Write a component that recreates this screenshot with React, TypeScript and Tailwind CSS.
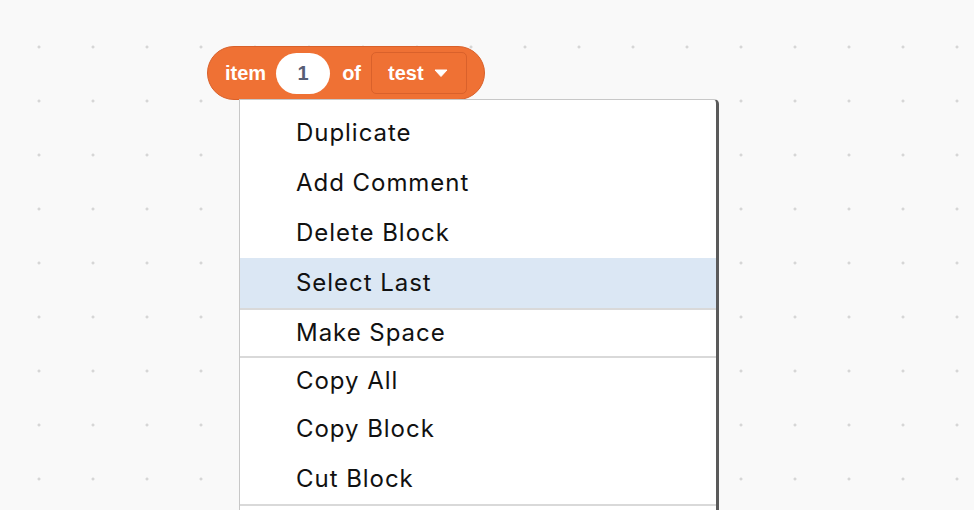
import React from 'react';

const menuFont = { fontFamily: 'Inter, "Open Sans", sans-serif' };

interface MenuItem {
  label: string;
  highlighted?: boolean;
  divider?: boolean;
  height: string;
}

const items: MenuItem[] = [
  { label: 'Duplicate', height: 'h-[50px]' },
  { label: 'Add Comment', height: 'h-[50px]' },
  { label: 'Delete Block', height: 'h-[50px]' },
  { label: 'Select Last', highlighted: true, height: 'h-[50px]' },
  { label: 'Make Space', divider: true, height: 'h-[48px]' },
  { label: 'Copy All', divider: true, height: 'h-[48px]' },
  { label: 'Copy Block', height: 'h-[50px]' },
  { label: 'Cut Block', height: 'h-[50px]' },
  { label: '', divider: true, height: 'h-[50px]' },
];

function Block() {
  return (
    <div
      className="flex items-center h-[54px] w-[278px] pl-[17px] pr-[15px] rounded-full bg-[#ef7134] border border-[#d9612b] text-white font-bold text-[20px]"
      style={{ fontFamily: '"Liberation Sans", Arial, sans-serif' }}
    >
      <span>item</span>
      <div className="ml-[10px] flex items-center justify-center w-[54px] h-[41px] rounded-full bg-white text-[#575e75] font-bold">
        1
      </div>
      <span className="ml-[12px]">of</span>
      <div className="ml-[10px] flex items-center h-[42px] w-[96px] pl-[16px] rounded-[5px] border border-[#d9612b] bg-[#ef7134]">
        <span>test</span>
        <svg className="ml-[10px]" width="14" height="8" viewBox="0 0 14 8">
          <path d="M1 1 L13 1 L7 7.5 Z" fill="white" stroke="white" strokeWidth="1" strokeLinejoin="round" />
        </svg>
      </div>
    </div>
  );
}

function ContextMenu() {
  return (
    <div
      className="ml-[32px] -mt-[1px] w-[480px] pt-[8px] bg-white border border-[#c8c8c8] border-r-[3px] border-r-[#5a5a5a] rounded-tr-[5px]"
      style={menuFont}
    >
      {items.map((item, i) => (
        <div
          key={i}
          className={`
            flex items-center pl-[56px] text-[24px] tracking-[0.04em] text-[#111] ${item.height}
            ${item.divider ? 'border-t-2 border-[#d9d9d9]' : ''}
            ${item.highlighted ? 'bg-[#dbe7f4]' : ''}
          `}
        >
          {item.label}
        </div>
      ))}
    </div>
  );
}

export default function App() {
  return (
    <div className="w-[974px] h-[510px] overflow-hidden bg-[#f9f9f9] bg-[radial-gradient(circle,#d6d6d6_1.2px,transparent_1.8px)] bg-[length:54px_54px] bg-[position:12px_20px]">
      <div className="pt-[46px] pl-[207px]">
        <Block />
        <ContextMenu />
      </div>
    </div>
  );
}
